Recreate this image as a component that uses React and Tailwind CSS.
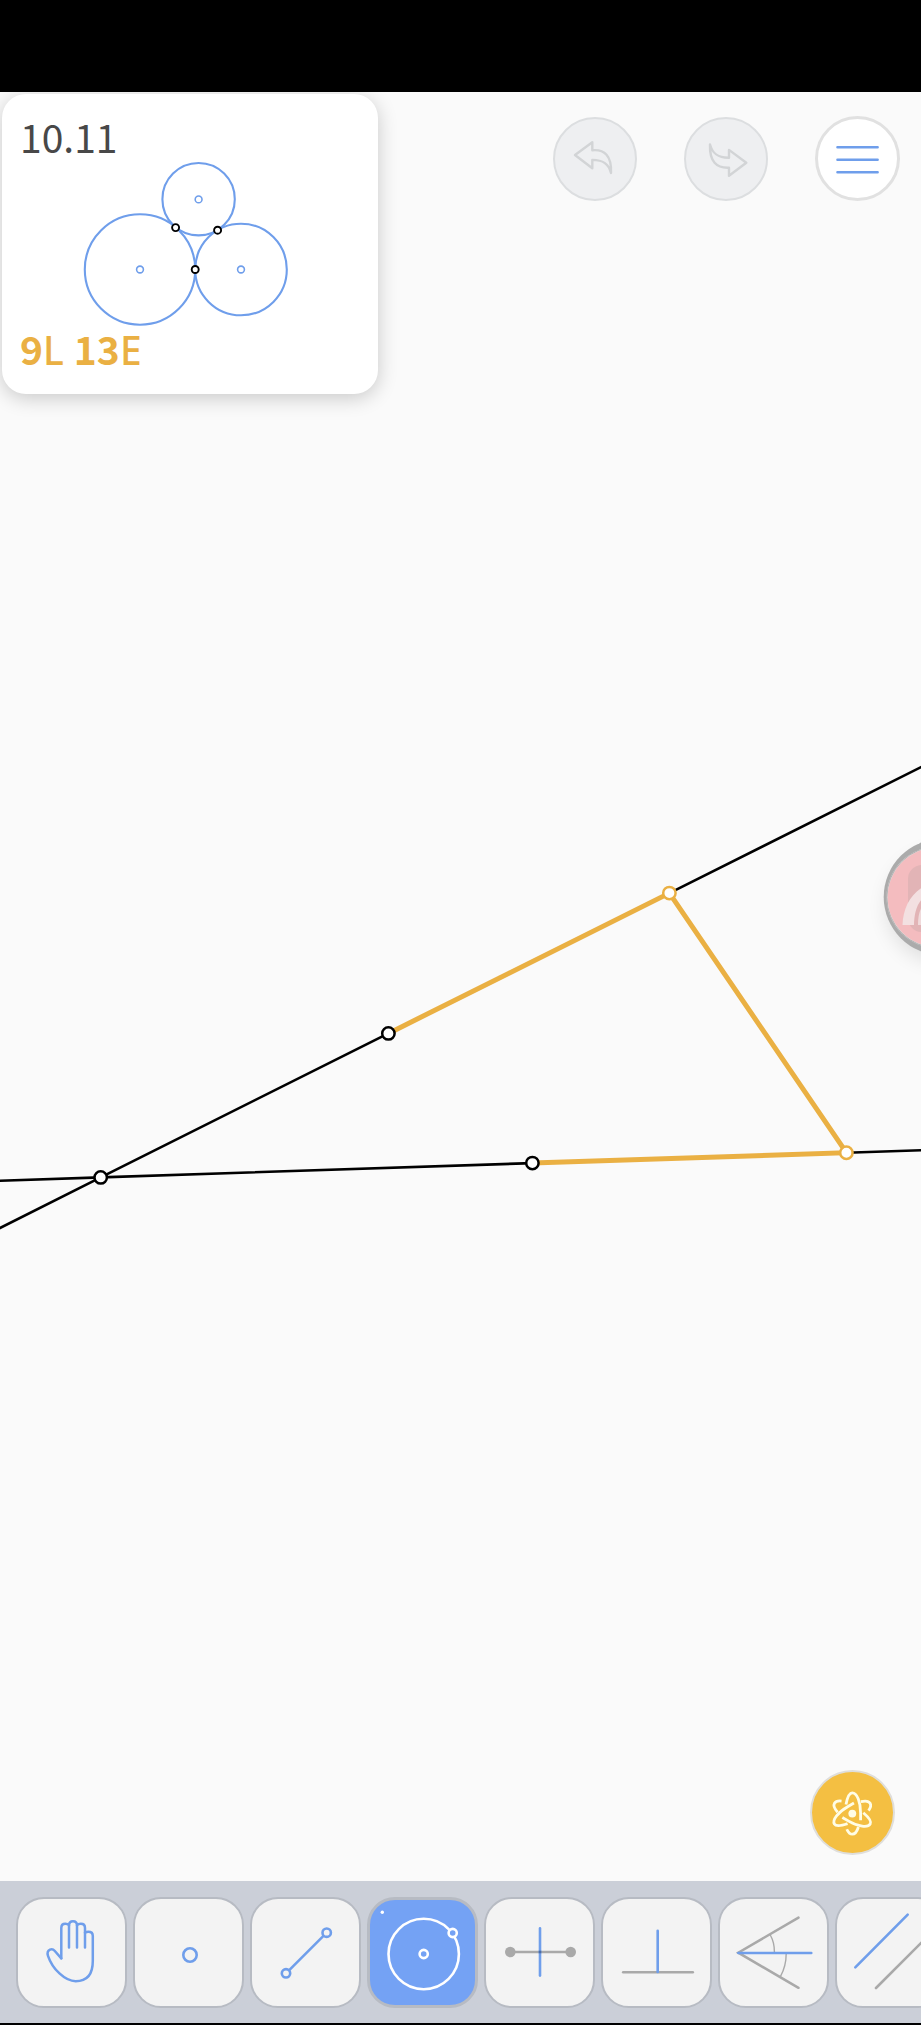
import React from "react";

const BLUE = "#6f9eeb";
const GRAY = "#a9a9a9";
const GOLD = "#eab043";

function HandIcon() {
  return (
    <g stroke={BLUE} strokeWidth="2.5" strokeLinecap="round" strokeLinejoin="round" fill="none">
      <path d="M45.3 61.3V31C45.3 27.9 47 26.8 49.3 26.8C51 26.8 52.2 27.2 53 28.2" />
      <path d="M53 50.6V28.6C53 25.8 54.6 24.3 57 24.3C59.4 24.3 61 25.8 61 28.6V50.6" />
      <path d="M61 28.2C61.8 27.2 63 26.8 64.8 26.8C67.4 26.8 69 28 69 31V50.6" />
      <path d="M69 35.8C70 35 71 34.8 72.4 34.8C75.2 34.8 76.8 36.2 76.8 39V64C76.8 78 71 84.2 59.7 84.2C49 84.2 36.4 72 32 58.8C31 55.6 31.8 53.6 34 52.6C35.8 51.9 37.4 52.4 38.6 53.8L45.3 61.3" />
    </g>
  );
}

function PointIcon() {
  return <circle cx="57" cy="58" r="6.7" fill="none" stroke={BLUE} strokeWidth="2.6" />;
}

function SegmentIcon() {
  return (
    <g stroke={BLUE} strokeWidth="2.6" fill="#f3f3f3">
      <path d="M36 76.3L76.7 35.7" />
      <circle cx="36" cy="76.3" r="4.2" />
      <circle cx="76.7" cy="35.7" r="4.2" />
    </g>
  );
}

function CircleIcon() {
  return (
    <g stroke="#ffffff" strokeWidth="2.6" fill="#74a2f4">
      <circle cx="56.7" cy="57" r="35.2" />
      <circle cx="56.7" cy="57" r="4.1" />
      <circle cx="85.7" cy="36" r="4.1" />
      <circle cx="15.3" cy="15.3" r="1.7" fill="#ffffff" stroke="none" />
    </g>
  );
}

function BisectorIcon() {
  return (
    <g strokeWidth="2.6" strokeLinecap="round">
      <path d="M26.3 55H86.7" stroke={GRAY} />
      <circle cx="26.3" cy="55" r="5.3" fill={GRAY} />
      <circle cx="86.7" cy="55" r="5.3" fill={GRAY} />
      <path d="M56 31.4V78.6" stroke={BLUE} />
      <path d="M54.7 55H57.3" stroke="#4a6da8" strokeLinecap="butt" />
    </g>
  );
}

function PerpendicularIcon() {
  return (
    <g strokeWidth="2.6" strokeLinecap="round">
      <path d="M22.2 75.3H91.8" stroke={GRAY} />
      <path d="M56.7 33.7V75" stroke={BLUE} />
    </g>
  );
}

function AngleIcon() {
  return (
    <g strokeWidth="2.5" strokeLinecap="round" fill="none">
      <path d="M80.5 20.6L20.3 55.7L80.5 90.8" stroke={GRAY} />
      <path d="M52.3 38Q56.5 45.5 56.4 55" stroke={GRAY} strokeWidth="1.4" />
      <path d="M68.2 56.5Q68.2 69 62.4 79.7" stroke={GRAY} strokeWidth="1.4" />
      <path d="M20.3 56H93.3" stroke={BLUE} />
    </g>
  );
}

function ParallelIcon() {
  return (
    <g strokeWidth="2.6" strokeLinecap="round">
      <path d="M20.3 70.3L72.7 17.7" stroke={BLUE} />
      <path d="M41 91L94 38" stroke={GRAY} />
    </g>
  );
}

const TOOLS = [
  { name: "Move", Icon: HandIcon },
  { name: "Point", Icon: PointIcon },
  { name: "Line", Icon: SegmentIcon },
  { name: "Circle", Icon: CircleIcon, active: true },
  { name: "Perpendicular bisector", Icon: BisectorIcon },
  { name: "Perpendicular", Icon: PerpendicularIcon },
  { name: "Angle bisector", Icon: AngleIcon },
  { name: "Parallel", Icon: ParallelIcon },
];

function Construction() {
  return (
    <svg
      className="absolute inset-0 size-full"
      viewBox="0 92 921 1789"
      preserveAspectRatio="xMidYMid slice"
      fill="none"
      aria-hidden="true"
    >
      <g stroke="#000000" strokeWidth="2.6">
        <path d="M-20 1238L100.7 1177.4L388.4 1033.4L669.4 893.1L941 757.1" />
        <path d="M-20 1181.4L100.7 1177.4L532.4 1163.1L846.4 1152.7L941 1149.6" />
      </g>
      <path
        d="M388.4 1033.4L669.4 893.1L846.4 1152.7L532.4 1163.1"
        stroke={GOLD}
        strokeWidth="5"
      />
      <g fill="#ffffff" strokeWidth="2.5">
        <g stroke="#000000">
          <circle cx="100.7" cy="1177.4" r="6.2" />
          <circle cx="388.4" cy="1033.4" r="6.2" />
          <circle cx="532.4" cy="1163.1" r="6.2" />
        </g>
        <g stroke={GOLD}>
          <circle cx="669.4" cy="893.1" r="6.2" />
          <circle cx="846.4" cy="1152.7" r="6.2" />
        </g>
      </g>
    </svg>
  );
}

function LevelCard() {
  return (
    <section className="mt-0.5 ml-0.5 flex w-[376px] flex-col rounded-3xl bg-white px-[18px] pt-[22px] pb-6 shadow-[0_4px_20px_rgba(0,0,0,0.2)]">
      <h1 className="text-[39px] leading-10 text-[#484848]">10.11</h1>
      <svg className="w-full" viewBox="20 156 340 172" fill="none" aria-hidden="true">
        <g stroke={BLUE} strokeWidth="2.1">
          <circle cx="198.6" cy="199.2" r="36.2" />
          <circle cx="140" cy="269.5" r="55.2" />
          <circle cx="241" cy="269.5" r="45.8" />
          <circle cx="198.6" cy="199.4" r="3.4" strokeWidth="1.6" />
          <circle cx="140" cy="269.5" r="3.4" strokeWidth="1.6" />
          <circle cx="241" cy="269.5" r="3.4" strokeWidth="1.6" />
        </g>
        <g stroke="#000000" strokeWidth="1.9" fill="#ffffff">
          <circle cx="175.6" cy="227.6" r="3.5" />
          <circle cx="217.6" cy="230.2" r="3.5" />
          <circle cx="195.2" cy="269.5" r="3.5" />
        </g>
      </svg>
      <p className="flex gap-2.5 text-[39px] leading-10 text-[#eab043]">
        <span>
          <b className="font-bold">9</b>
          <span className="font-['Noto_Sans',sans-serif] font-medium">L</span>
        </span>
        <span>
          <b className="font-bold">13</b>
          <span className="font-['Noto_Sans',sans-serif] font-medium">E</span>
        </span>
      </p>
    </section>
  );
}

function HeaderButtons() {
  return (
    <div className="flex items-center gap-[47px] pt-6 pr-[21px]">
      <button
        type="button"
        aria-label="Undo"
        className="size-[84px] rounded-full border-2 border-[#dcdee0] bg-[#eeeff1]"
      >
        <svg className="size-full" viewBox="2 2 80 80" fill="none" stroke="#d2d4d6" strokeWidth="2.4" strokeLinejoin="round" strokeLinecap="round">
          <path d="M22 38L39.3 25.3V33.3C51.5 32.1 58.8 39 58 56C55.8 46.5 50 42.9 39.3 42.9V51.3Z" />
        </svg>
      </button>
      <button
        type="button"
        aria-label="Redo"
        className="size-[84px] rounded-full border-2 border-[#dcdee0] bg-[#eeeff1]"
      >
        <svg className="size-full" viewBox="2 2 80 80" fill="none" stroke="#d2d4d6" strokeWidth="2.4" strokeLinejoin="round" strokeLinecap="round">
          <path d="M26 27.5C28.5 37 34 40.9 45 40.7V32.9L62.3 45.7L45 58.7V50.7C32.5 51.3 25.4 44.5 26 27.5Z" />
        </svg>
      </button>
      <button
        type="button"
        aria-label="Menu"
        className="size-[85px] rounded-full border-3 border-[#e1e1e1] bg-white"
      >
        <svg className="size-full" viewBox="3 3 79 79" fill="none" stroke={BLUE} strokeWidth="2.6" strokeLinecap="round">
          <path d="M22.5 31.3H62.6M22.5 43.8H62.6M22.5 56.3H62.6" />
        </svg>
      </button>
    </div>
  );
}

function FloatingBall() {
  return (
    <button
      type="button"
      aria-label="Assistive ball"
      className="absolute top-[716px] right-0 h-[180px] w-[78px]"
    >
      <svg className="size-full" viewBox="843 808 78 180" fill="none">
        <defs>
          <filter id="ball-shadow" x="-50%" y="-50%" width="200%" height="200%">
            <feGaussianBlur stdDeviation="10" />
          </filter>
        </defs>
        <circle cx="942" cy="907" r="55" fill="#000000" opacity="0.11" filter="url(#ball-shadow)" />
        <circle cx="942" cy="897" r="58.3" fill="#ababab" />
        <circle cx="937.5" cy="897.3" r="51" fill="#dedede" />
        <circle cx="937.5" cy="897.3" r="50.6" stroke="#999999" strokeWidth="0.6" />
        <circle cx="937.5" cy="897.3" r="49.8" fill="#f4bcbf" />
        <rect x="908" y="865" width="60" height="67" rx="14" fill="#e2b4b6" />
        <path d="M902.5 925C903 909 910 894.5 923 887V898C916.5 904 914.2 914 914 925Z" fill="#f3e0e1" />
        <path d="M918 925C918 917 919 911 923 905V925Z" fill="#f0dadb" />
      </svg>
    </button>
  );
}

const ORBIT =
  "M36 34.5C37.4 27 39.4 22.9 42.3 22.9C47 22.9 50.6 32 50.6 43V50.3M48.4 57C47 61.6 44.8 64.2 42.3 64.2C40 64.2 38.2 62.4 36.8 59.2";

function ExploreButton() {
  return (
    <button
      type="button"
      aria-label="Explore"
      className="relative size-[85px] rounded-full border-2 border-[#dfdedb] bg-[#f4bf42]"
    >
      <svg className="size-full" viewBox="2 2 81 81" fill="none" stroke="#fffde6" strokeWidth="2.8">
        <path d={ORBIT} />
        <path d={ORBIT} transform="rotate(120 42.3 43.6)" />
        <path d={ORBIT} transform="rotate(240 42.3 43.6)" />
        <circle cx="42.3" cy="43.6" r="3.9" fill="#fffde6" stroke="none" />
      </svg>
    </button>
  );
}

function Toolbar() {
  return (
    <nav
      aria-label="Tools"
      className="flex gap-1.5 overflow-hidden bg-[#cbcfd8] pt-4 pb-[15px] pl-4"
    >
      {TOOLS.map(({ name, Icon, active }) => (
        <button
          key={name}
          type="button"
          aria-label={name}
          aria-pressed={Boolean(active)}
          className={
            active
              ? "size-[111px] shrink-0 rounded-[28px] border-3 border-[#b7bbc3] bg-[#74a2f4]"
              : "size-[111px] shrink-0 rounded-[28px] border-2 border-[#b7bbc3] bg-[#f3f3f3]"
          }
        >
          <svg className="size-full" viewBox={active ? "3 3 105 105" : "2 2 107 107"} fill="none">
            <Icon />
          </svg>
        </button>
      ))}
    </nav>
  );
}

export default function App() {
  return (
    <div className="flex min-h-screen flex-col overflow-hidden bg-black font-['Noto_Sans_CJK_SC',sans-serif]">
      <div className="h-[92px] shrink-0 bg-black" />
      <main className="relative flex flex-1 flex-col justify-between overflow-hidden bg-[#fafafa]">
        <Construction />
        <header className="relative flex items-start justify-between">
          <LevelCard />
          <HeaderButtons />
        </header>
        <FloatingBall />
        <div className="flex justify-end pr-[26px] pb-[26px]">
          <ExploreButton />
        </div>
      </main>
      <Toolbar />
      <div className="h-0.5 shrink-0 bg-black" />
    </div>
  );
}
